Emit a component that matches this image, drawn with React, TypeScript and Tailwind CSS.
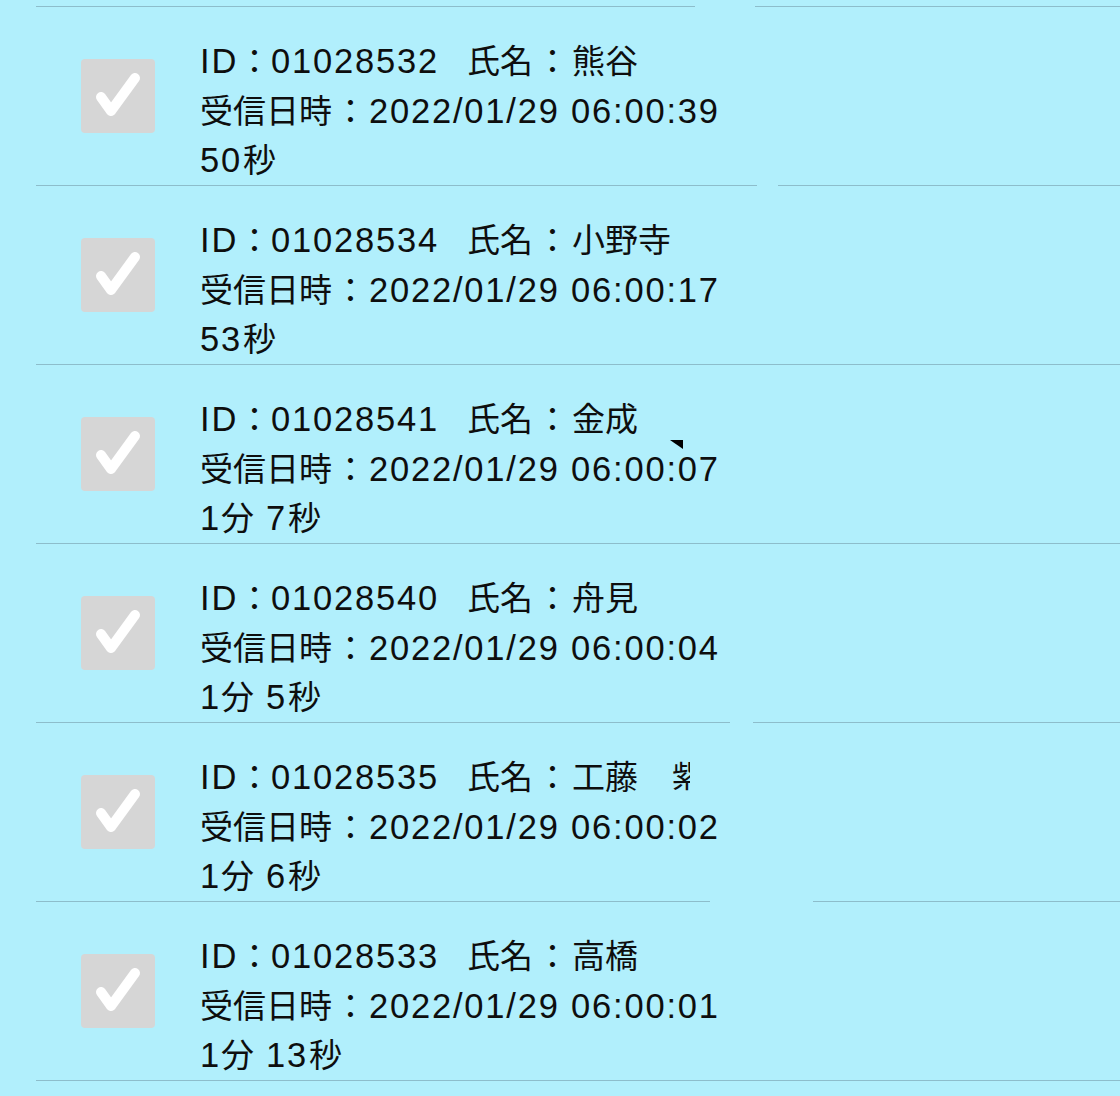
const rows = [
  { id: "01028532", name: "熊谷", time: "06:00:39", min: "", sec: "50", line: { w: "w-[721px]", gap: "ml-[21px]" } },
  { id: "01028534", name: "小野寺", time: "06:00:17", min: "", sec: "53", line: null },
  { id: "01028541", name: "金成", time: "06:00:07", min: "1", sec: "7", line: null, mark: true },
  { id: "01028540", name: "舟見", time: "06:00:04", min: "1", sec: "5", line: { w: "w-[694px]", gap: "ml-[23px]" } },
  { id: "01028535", name: "工藤", time: "06:00:02", min: "1", sec: "6", line: { w: "w-[674px]", gap: "ml-[103px]" }, extra: "紫" },
  { id: "01028533", name: "高橋", time: "06:00:01", min: "1", sec: "13", line: null },
];

type Cut = { w: string; gap: string } | null;

const Separator = ({ cut }: { cut: Cut }) => {
  if (!cut) return <div className="ml-[36px] h-px bg-[#8dbdcb]" />;
  return (
    <div className="ml-[36px] flex h-px">
      <div className={`${cut.w} bg-[#8dbdcb]`} />
      <div className={`${cut.gap} flex-1 bg-[#8dbdcb]`} />
    </div>
  );
};

// CJK glyphs sit a little narrower than the latin digits
const J = ({ children, className = "" }: { children: React.ReactNode; className?: string }) => (
  <span className={`text-[33px] tracking-normal ${className}`}>{children}</span>
);

const CheckBox = () => (
  <div className="mt-[52px] ml-[81px] h-[74px] w-[74px] shrink-0 rounded-[4px] bg-[#d6d6d6]">
    <svg viewBox="0 0 74 74" className="h-full w-full">
      <path
        d="M20 38 L30 52 L54 19"
        fill="none"
        stroke="#ffffff"
        strokeWidth="10"
        strokeLinecap="round"
        strokeLinejoin="round"
      />
    </svg>
  </div>
);

export default function App() {
  return (
    <div
      className="min-h-screen w-full bg-[#b1effc] text-[#0e0e0e]"
      style={{ fontFamily: '"Liberation Sans", "Noto Sans CJK JP", sans-serif' }}
    >
      <div className="h-[6px]" />
      <Separator cut={{ w: "w-[659px]", gap: "ml-[60px]" }} />

      {rows.map((r) => (
        <div key={r.id}>
          <div className="relative flex h-[178px]">
            <CheckBox />
            <div className="ml-[45px] pt-[30px] text-[34.5px] leading-[48.5px] tracking-[1.8px] whitespace-nowrap">
              <div>
                ID<J>：</J>{r.id}
                <J className="ml-[28px]">
                  氏名<span className="mx-[3px]">：</span>{r.name}
                </J>
                {r.extra && (
                  <J className="ml-[34px] inline-block w-[18px] overflow-hidden align-top !text-[30px]">
                    {r.extra}
                  </J>
                )}
              </div>
              <div>
                <J>受信日時<span className="mx-[2px]">：</span></J>2022/01/29 {r.time}
              </div>
              <div>
                {r.min && (
                  <>
                    {r.min}<J className="mr-[12px]">分</J>
                  </>
                )}
                {r.sec}<J className="ml-[1px]">秒</J>
              </div>
            </div>
            {r.mark && (
              <svg className="absolute left-[670px] top-[75px]" width="14" height="10" viewBox="0 0 14 10">
                <path d="M0 0 L13 0 L13 9 Z" fill="#000000" />
              </svg>
            )}
          </div>
          <Separator cut={r.line} />
        </div>
      ))}
    </div>
  );
}
